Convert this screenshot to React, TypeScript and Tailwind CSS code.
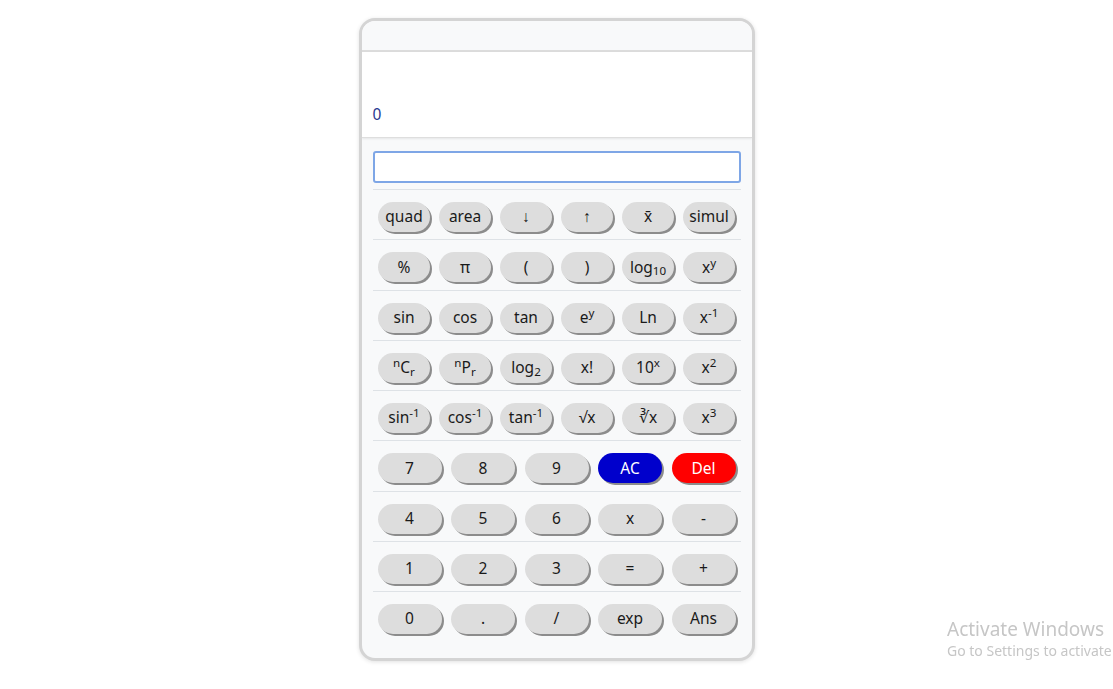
import React from "react";

type Key = { label: React.ReactNode; tone?: "blue" | "red" };

const sciRows: Key[][] = [
  [
    { label: "quad" },
    { label: "area" },
    { label: "↓" },
    { label: "↑" },
    { label: "x̄" },
    { label: "simul" },
  ],
  [
    { label: "%" },
    { label: "π" },
    { label: "(" },
    { label: ")" },
    { label: <>log<sub>10</sub></> },
    { label: <>x<sup>y</sup></> },
  ],
  [
    { label: "sin" },
    { label: "cos" },
    { label: "tan" },
    { label: <>e<sup>y</sup></> },
    { label: "Ln" },
    { label: <>x<sup>-1</sup></> },
  ],
  [
    { label: <><sup>n</sup>C<sub>r</sub></> },
    { label: <><sup>n</sup>P<sub>r</sub></> },
    { label: <>log<sub>2</sub></> },
    { label: "x!" },
    { label: <>10<sup>x</sup></> },
    { label: <>x<sup>2</sup></> },
  ],
  [
    { label: <>sin<sup>-1</sup></> },
    { label: <>cos<sup>-1</sup></> },
    { label: <>tan<sup>-1</sup></> },
    { label: "√x" },
    { label: "∛x" },
    { label: <>x<sup>3</sup></> },
  ],
];

const numRows: Key[][] = [
  [{ label: "7" }, { label: "8" }, { label: "9" }, { label: "AC", tone: "blue" }, { label: "Del", tone: "red" }],
  [{ label: "4" }, { label: "5" }, { label: "6" }, { label: "x" }, { label: "-" }],
  [{ label: "1" }, { label: "2" }, { label: "3" }, { label: "=" }, { label: "+" }],
  [{ label: "0" }, { label: "." }, { label: "/" }, { label: "exp" }, { label: "Ans" }],
];

const KeyButton = ({ k, wide }: { k: Key; wide?: boolean }) => {
  const tone =
    k.tone === "blue"
      ? "bg-[#0000cc] text-white"
      : k.tone === "red"
      ? "bg-[#ff0000] text-white"
      : "bg-[#dddddd] text-[#1a1a1a]";
  return (
    <button
      className={`${wide ? "w-[64px]" : "w-[52px]"} h-[30px] rounded-full ${tone} shadow-[2px_2px_0_0_#8c8c8c] text-[15.5px] leading-none flex items-center justify-center`}
    >
      <span>{k.label}</span>
    </button>
  );
};

export default function App() {
  return (
    <div
      className="min-h-screen bg-white flex justify-center pt-[18px]"
      style={{ fontFamily: '"Noto Sans", "Open Sans", sans-serif' }}
    >
      <div className="w-[396px] h-[643px] rounded-[16px] border-[3px] border-[#d4d4d4] bg-[#f8f9fa] overflow-hidden shadow-[0_1px_4px_rgba(0,0,0,0.12)] flex flex-col">
        <div className="h-[31px] bg-[#f8f9fa] border-b-2 border-[#dcdcdc]" />
        <div className="h-[86px] bg-white border-b border-[#dedede] shadow-[0_1px_2px_rgba(0,0,0,0.08)] flex items-end px-[11px] pb-[15px]">
          <span className="text-[15.5px] text-[#27378f] leading-none">0</span>
        </div>
        <div className="px-[11px] pt-[13px]">
          <input
            autoFocus
            className="w-full h-[32px] bg-white border-2 border-[#7ea6e6] rounded-[3px] outline-none px-[2px] text-[15px]"
          />
          <div className="mt-[6px] border-t border-[#dee2e6]" />
          {sciRows.map((row, i) => (
            <div key={i} className="pt-[12px] pb-[7.25px] border-b border-[#dee2e6] flex justify-center gap-[9px]">
              {row.map((k, j) => (
                <KeyButton key={j} k={k} />
              ))}
            </div>
          ))}
          {numRows.map((row, i) => (
            <div
              key={i}
              className={`pt-[12px] pb-[7.25px] flex justify-center gap-[9.5px] ${i < numRows.length - 1 ? "border-b border-[#dee2e6]" : ""}`}
            >
              {row.map((k, j) => (
                <KeyButton key={j} k={k} wide />
              ))}
            </div>
          ))}
        </div>
      </div>

      <div className="fixed left-[947px] right-0 top-[617px] overflow-hidden whitespace-nowrap text-[#c6c6c6] pointer-events-none">
        <div className="text-[19px] leading-[24px]">Activate Windows</div>
        <div className="text-[14px] leading-[20px]">Go to Settings to activate Windows.</div>
      </div>
    </div>
  );
}
